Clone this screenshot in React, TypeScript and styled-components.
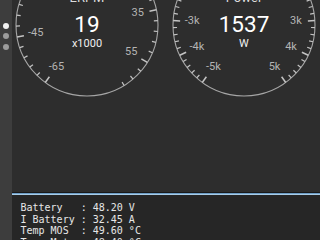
import React from "react";
import styled, { createGlobalStyle } from "styled-components";

const Global = createGlobalStyle`
  html, body { margin: 0; padding: 0; background: #2c2c2c; overflow: hidden; }
  #root { width: 320px; height: 240px; }
`;

const Root = styled.div`
  display: grid;
  grid-template-columns: 12px 1fr;
  width: 320px;
  height: 240px;
  overflow: hidden;
`;

const Sidebar = styled.div`
  background: #3d3d3d;
  display: flex;
  flex-direction: column;
  align-items: center;
  gap: 4.5px;
  padding-top: 22.5px;
`;

const Dot = styled.span<{ $active?: boolean }>`
  width: 6px;
  height: 6px;
  border-radius: 50%;
  background: ${(p) => (p.$active ? "#f2f2f2" : "#9c9c9c")};
`;

const Main = styled.div`
  display: flex;
  flex-direction: column;
  min-width: 0;
`;

const GaugePanel = styled.div`
  height: 192px;
  background: #2d2d2d;
  overflow: hidden;
  display: flex;
  gap: 6.5px;
  align-items: flex-start;
`;

const GaugeSvg = styled.svg`
  flex: none;
  margin-top: -50px;
  display: block;
`;

const Divider = styled.div`
  height: 3px;
  border-top: 1px solid #191919;
  background: linear-gradient(#6d9dc6 0 1px, #a9cde8 1px 2px);
  box-sizing: border-box;
`;

const Console = styled.pre`
  margin: 0;
  flex: 1;
  background: #262626;
  color: #e6e6e6;
  font-family: "DejaVu Sans Mono", monospace;
  font-size: 10px;
  line-height: 11.5px;
  padding: 7px 0 0 8.5px;
  white-space: pre;
`;

type GaugeProps = {
  title: string;
  value: string;
  unit: string;
  min: number;
  max: number;
  major: number;
  minor: number;
  fmt: (v: number) => string;
};

const START = 36;
const END = 324;

function pt(cx: number, cy: number, r: number, deg: number): [number, number] {
  const t = (deg * Math.PI) / 180;
  return [cx - r * Math.sin(t), cy + r * Math.cos(t)];
}

function Gauge({ title, value, unit, min, max, major, minor, fmt }: GaugeProps) {
  const cx = 75;
  const cy = 75;
  const R = 71;
  const ang = (v: number) => START + ((v - min) / (max - min)) * (END - START);
  const ticks: React.ReactElement[] = [];
  const labels: React.ReactElement[] = [];
  const n = Math.round((max - min) / minor);
  for (let i = 0; i <= n; i++) {
    const v = min + i * minor;
    const isMajor = Math.abs((v - min) / major - Math.round((v - min) / major)) < 1e-6;
    const a = ang(v);
    const [x1, y1] = pt(cx, cy, R, a);
    const [x2, y2] = pt(cx, cy, R - (isMajor ? 7 : 4), a);
    ticks.push(
      <line key={i} x1={x1} y1={y1} x2={x2} y2={y2} stroke="#c4c4c4" strokeWidth={isMajor ? 1.5 : 1.2} />
    );
    if (isMajor) {
      const [lx, ly] = pt(cx, cy, 52, a);
      if (ly > 55) {
        labels.push(
          <text key={"l" + i} x={lx} y={ly - 1} textAnchor="middle" dominantBaseline="central" fill="#b4b4b4" fontSize="11" fontFamily="Roboto, sans-serif">
            {fmt(v)}
          </text>
        );
      }
    }
  }
  return (
    <GaugeSvg width={150} height={150} viewBox="0 0 150 150">
      <circle cx={cx} cy={cy} r={R} fill="none" stroke="#a6a6a6" strokeWidth={1.1} />
      {ticks}
      {labels}
      <text x={cx} y={51.5} textAnchor="middle" fill="#dcdcdc" fontSize="13" fontFamily="Roboto, sans-serif">{title}</text>
      <text x={cx} y={82} textAnchor="middle" fill="#ffffff" fontSize="22.5" fontFamily="Roboto, sans-serif">{value}</text>
      <text x={cx} y={96.5} textAnchor="middle" fill="#f0f0f0" fontSize="11" fontFamily="Roboto, sans-serif">{unit}</text>
    </GaugeSvg>
  );
}

const lines = [
  "Battery   : 48.20 V",
  "I Battery : 32.45 A",
  "Temp MOS  : 49.60 °C",
  "Temp Motor: 48.40 °C",
];

export default function App() {
  return (
    <Root>
      <Global />
      <Sidebar>
        <Dot $active />
        <Dot />
        <Dot />
      </Sidebar>
      <Main>
        <GaugePanel>
          <Gauge title="ERPM" value="19" unit="x1000" min={-65} max={65} major={20} minor={4} fmt={(v) => String(v)} />
          <Gauge title="Power" value="1537" unit="W" min={-5000} max={5000} major={1000} minor={200} fmt={(v) => (v === 0 ? "0" : `${v / 1000}k`)} />
        </GaugePanel>
        <Divider />
        <Console>{lines.join("\n")}</Console>
      </Main>
    </Root>
  );
}
